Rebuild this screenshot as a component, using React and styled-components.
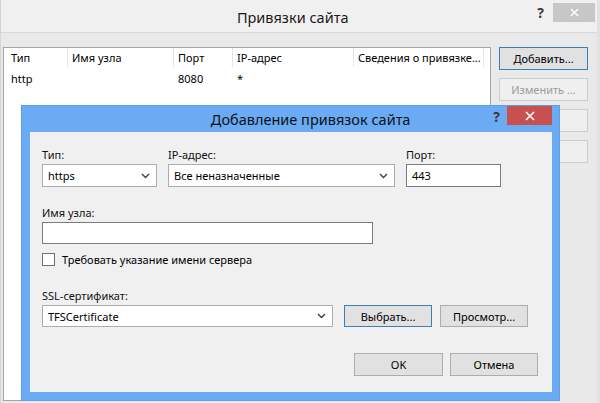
import React from 'react';
import styled, { createGlobalStyle } from 'styled-components';

const Global = createGlobalStyle`
  html, body { margin: 0; padding: 0; width: 600px; height: 403px; overflow: hidden; background: #e9e9e9; }
  body { font-family: "Segoe UI", "Noto Sans", sans-serif; font-size: 11px; color: #000; }
  * { box-sizing: border-box; }
`;

const Window = styled.div`
  position: relative;
  width: 600px;
  height: 403px;
  display: flex;
  flex-direction: column;
  background: #e9e9e9;
  border-left: 1px solid #d6d6d6;
  border-right: 3px solid #e2e2e2;
`;

const TitleBar = styled.div`
  height: 33px;
  flex: none;
  display: flex;
  align-items: flex-start;
  background: #f0f0f0;
  border-bottom: 1px solid #d8d8d8;
  padding-top: 3px;
  padding-right: 2px;
`;

const WinTitle = styled.div`
  flex: 1;
  text-align: center;
  font-size: 14.5px;
  line-height: 22px;
  padding-top: 3px;
  padding-left: 47px;
  color: #1a1a1a;
`;

const Help = styled.div`
  font-size: ${p => p.$size || 14}px;
  font-weight: 700;
  color: #3a3a3a;
  line-height: 16px;
  margin-right: ${p => p.$gap || 10}px;
  padding-top: ${p => p.$top || 2}px;
`;

const CloseBtn = styled.div`
  width: ${p => p.$w}px;
  height: 19px;
  background: ${p => p.$bg};
  display: flex;
  align-items: center;
  justify-content: center;
`;

const Body = styled.div`
  flex: 1;
  display: flex;
  gap: 8px;
  padding: 14px 9px 2px 2px;
  min-height: 0;
`;

const Table = styled.div`
  width: 488px;
  background: #fff;
  border: 1px solid #a5a5a5;
  display: flex;
  flex-direction: column;
`;

const TRow = styled.div`
  display: grid;
  grid-template-columns: 64px 106px 59px 121px 130px 1fr;
  height: ${p => (p.$head ? 19 : 22)}px;
  align-items: center;
`;

const Cell = styled.div`
  height: 100%;
  display: flex;
  align-items: center;
  padding-left: ${p => (p.$first ? 7 : 4)}px;
  border-right: ${p => (p.$head && !p.$last ? '1px solid #e5e5e5' : 'none')};
  white-space: nowrap;
  overflow: hidden;
`;

const SideCol = styled.div`
  width: 89px;
  display: flex;
  flex-direction: column;
  gap: 8px;
`;

const Button = styled.div`
  width: ${p => p.$w || 89}px;
  height: ${p => p.$h || 23}px;
  flex: none;
  display: flex;
  align-items: center;
  justify-content: center;
  background: ${p => (p.$disabled ? '#efefef' : '#e1e1e1')};
  border: 1px solid ${p => (p.$default ? '#3c7fb1' : p.$disabled ? '#cdcdcd' : '#adadad')};
  color: ${p => (p.$disabled ? '#9d9d9d' : '#000')};
  white-space: nowrap;
`;

const Dialog = styled.div`
  position: absolute;
  left: 20px;
  top: 105px;
  width: 539px;
  height: 296px;
  background: #6aabf3;
  border: 1px solid #5d9ee6;
  padding: 0 7px 8px 8px;
  display: flex;
  flex-direction: column;
`;

const DlgTitleBar = styled.div`
  height: 26px;
  flex: none;
  display: flex;
  align-items: flex-start;
`;

const DlgTitle = styled.div`
  flex: 1;
  text-align: center;
  font-size: 14.5px;
  line-height: 20px;
  padding-top: 3px;
  padding-left: 98px;
  color: #111;
`;

const Content = styled.div`
  flex: 1;
  background: #f0f0f0;
  padding: 15px 14px 0 12px;
  display: flex;
  flex-direction: column;
`;

const FieldRow = styled.div`
  display: flex;
  align-items: flex-end;
  gap: ${p => p.$gap || 0}px;
  margin-top: ${p => p.$mt || 0}px;
  margin-left: ${p => p.$ml || 0}px;
  justify-content: ${p => (p.$end ? 'flex-end' : 'flex-start')};
`;

const Field = styled.div`
  display: flex;
  flex-direction: column;
  width: ${p => p.$w}px;
`;

const Label = styled.div`
  line-height: 16px;
  height: 16px;
  margin-top: ${p => p.$mt || 0}px;
  margin-bottom: 1px;
  color: #111;
`;

const Select = styled.div`
  width: ${p => p.$w ? `${p.$w}px` : '100%'};
  height: ${p => p.$h || 23}px;
  background: #fff;
  border: 1px solid #acacac;
  display: flex;
  align-items: center;
  padding: 0 6px 0 5px;
  justify-content: space-between;
  flex: none;
`;

const TextBox = styled.div`
  width: ${p => p.$w ? `${p.$w}px` : '100%'};
  height: ${p => p.$h || 23}px;
  background: #fff;
  border: 1px solid #7a7a7a;
  display: flex;
  align-items: center;
  padding-left: 5px;
`;

const CheckRow = styled.div`
  display: flex;
  align-items: center;
  margin-top: 9px;
  height: 13px;
  line-height: 13px;
  overflow: visible;
`;

const Check = styled.div`
  width: 13px;
  height: 13px;
  border: 1px solid #707070;
  background: #fff;
  margin-right: 7px;
`;

const Chevron = () => (
  <svg width="9" height="6" viewBox="0 0 9 6">
    <polyline points="1,1 4.5,4.5 8,1" fill="none" stroke="#404040" strokeWidth="1.4" />
  </svg>
);

const XIcon = ({ size = 9, w = 1.5 }) => (
  <svg width={size} height={size} viewBox="0 0 10 10">
    <line x1="1" y1="1" x2="9" y2="9" stroke="#fff" strokeWidth={w} />
    <line x1="9" y1="1" x2="1" y2="9" stroke="#fff" strokeWidth={w} />
  </svg>
);

export default function App() {
  const head = ['Тип', 'Имя узла', 'Порт', 'IP-адрес', 'Сведения о привязке...', ''];
  const row = ['http', '', '8080', '*', '', ''];
  return (
    <>
      <Global />
      <Window>
        <TitleBar>
          <WinTitle>Привязки сайта</WinTitle>
          <Help $gap={9}>?</Help>
          <CloseBtn $w={42} $bg="#c7c7c7">
            <XIcon />
          </CloseBtn>
        </TitleBar>
        <Body>
          <Table>
            <TRow $head>
              {head.map((h, i) => (
                <Cell key={i} $head $first={i === 0} $last={i === head.length - 1}>{h}</Cell>
              ))}
            </TRow>
            <TRow>
              {row.map((c, i) => (
                <Cell key={i} $first={i === 0}>{c}</Cell>
              ))}
            </TRow>
          </Table>
          <SideCol>
            <Button $default>Добавить...</Button>
            <Button $disabled>Изменить ...</Button>
            <Button $disabled />
            <Button $disabled />
          </SideCol>
        </Body>

        <Dialog>
          <DlgTitleBar>
            <DlgTitle>Добавление привязок сайта</DlgTitle>
            <Help $gap={7} $top={3}>?</Help>
            <CloseBtn $w={45} $bg="#c75050">
              <XIcon size={10} w={1.6} />
            </CloseBtn>
          </DlgTitleBar>
          <Content>
            <FieldRow $gap={11}>
              <Field $w={115}>
                <Label>Тип:</Label>
                <Select><span>https</span><Chevron /></Select>
              </Field>
              <Field $w={227}>
                <Label>IP-адрес:</Label>
                <Select><span>Все неназначенные</span><Chevron /></Select>
              </Field>
              <Field $w={95}>
                <Label>Порт:</Label>
                <TextBox>443</TextBox>
              </Field>
            </FieldRow>
            <Field $w={331}>
              <Label $mt={18}>Имя узла:</Label>
              <TextBox $h={22} />
            </Field>
            <CheckRow>
              <Check />
              <span>Требовать указание имени сервера</span>
            </CheckRow>
            <Label $mt={22}>SSL-сертификат:</Label>
            <FieldRow>
              <Select $w={291} $h={22}><span>TFSCertificate</span><Chevron /></Select>
              <FieldRow $gap={8} $ml={11}>
                <Button $w={88} $h={22} $default>Выбрать...</Button>
                <Button $w={88} $h={22}>Просмотр...</Button>
              </FieldRow>
            </FieldRow>
            <FieldRow $end $gap={7} $mt={26}>
              <Button>OK</Button>
              <Button $w={88}>Отмена</Button>
            </FieldRow>
          </Content>
        </Dialog>
      </Window>
    </>
  );
}
